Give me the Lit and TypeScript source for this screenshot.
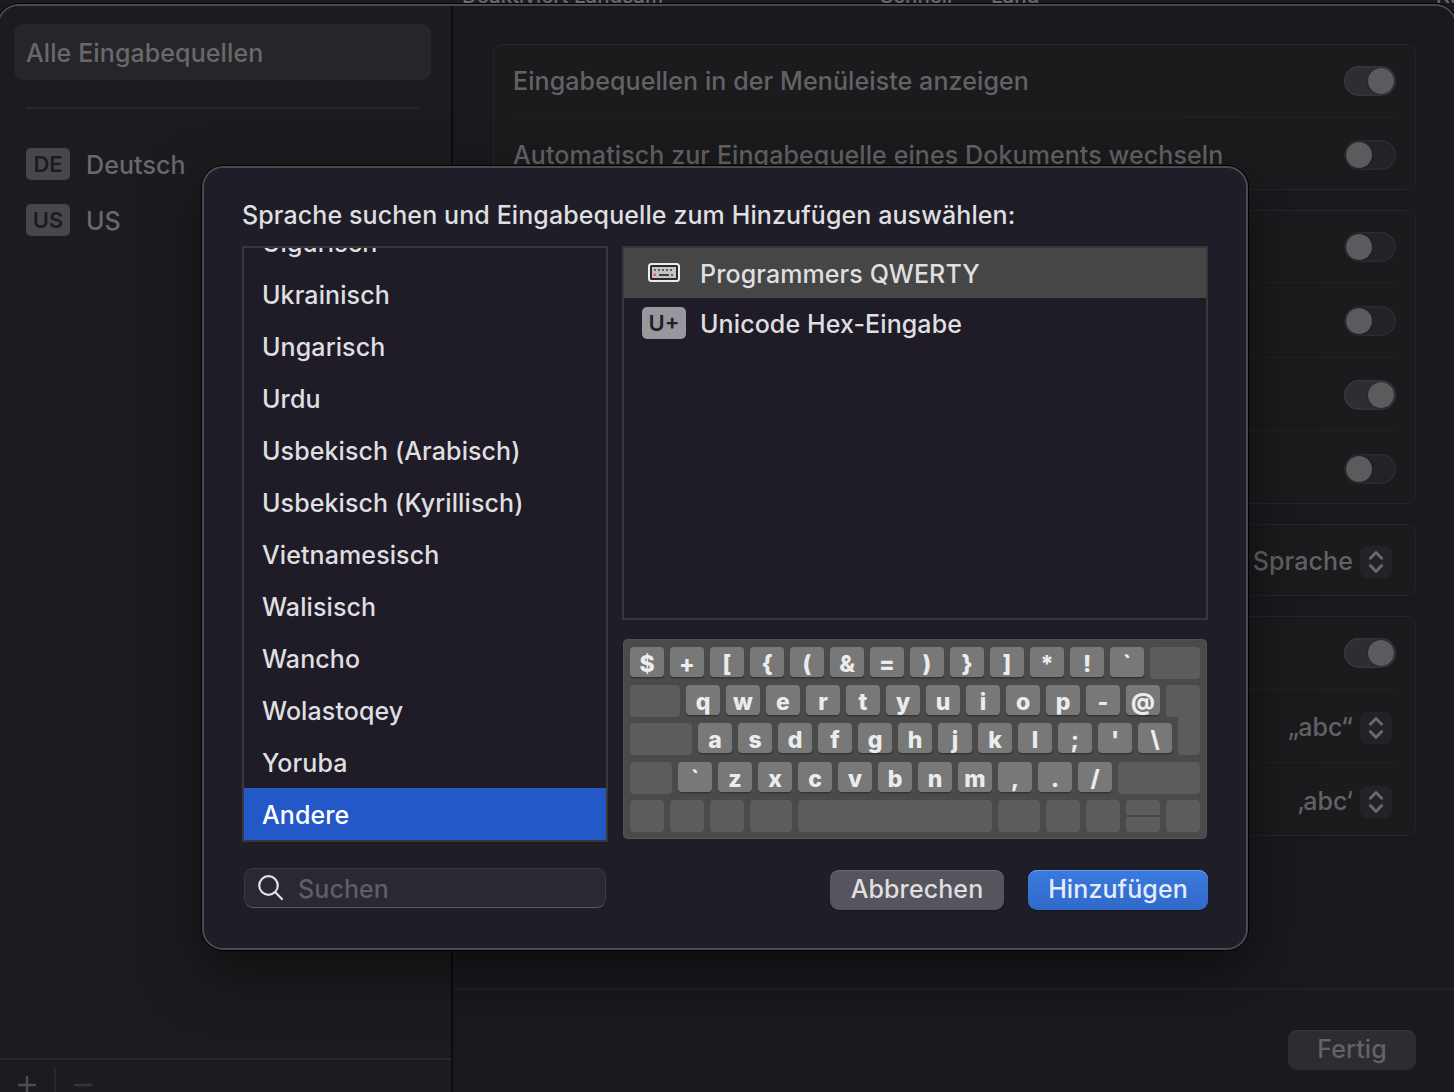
import { LitElement, html, css, svg, nothing } from "lit";
import { customElement, property } from "lit/decorators.js";
import { classMap } from "lit/directives/class-map.js";

@customElement("toggle-switch")
class ToggleSwitch extends LitElement {
  @property({ type: Boolean }) on = false;
  static styles = css`
    :host { display: block; flex: none; }
    .track {
      box-sizing: border-box; width: 52px; height: 30px; border-radius: 15px; padding: 2px;
      display: flex; background: #232227; box-shadow: inset 0 0 0 1.5px #2c2b30;
    }
    .track.on { justify-content: flex-end; background: #2e2d34; box-shadow: inset 0 0 0 1.5px #37363c; }
    .knob { width: 26px; height: 26px; border-radius: 50%; background: #5b5a5c; box-shadow: 0 0 2px #17161a; }
  `;
  render() {
    return html`<div class=${classMap({ track: true, on: this.on })}><div class="knob"></div></div>`;
  }
}

@customElement("popup-value")
class PopupValue extends LitElement {
  @property() label = "";
  static styles = css`
    :host { display: flex; align-items: center; gap: 7px; padding-right: 4px; }
    .icon { display: block; position: relative; top: 1px; }
  `;
  render() {
    return html`<span>${this.label}</span>
      <svg class="icon" width="32" height="32" viewBox="0 0 32 32">
        <rect width="32" height="32" rx="7" fill="#232227"></rect>
        <path d="M10.300 12.200 16 6.400l5.700 5.800M10.300 19.600l5.700 5.800 5.700-5.800" fill="none" stroke="#6a696c"
          stroke-width="2.800" stroke-linecap="round" stroke-linejoin="round"></path>
      </svg>`;
  }
}

type Key = { t?: string; w?: number; kind?: string };
const chars = (s: string): Key[] => s.split("").map((t) => ({ t }));
const blank = (w = 34, kind = ""): Key => ({ w, kind });
const KEY_ROWS: Key[][] = [
  [...chars("$+[{(&=)}]*!`"), blank(50)],
  [blank(50), ...chars("qwertyuiop-@"), blank(34, "enter-top")],
  [blank(62), ...chars("asdfghjkl;'\\"), blank(22, "enter-low")],
  [blank(42), ...chars("`zxcvbnm,./"), blank(82)],
  [blank(), blank(), blank(), blank(42), blank(194), blank(42), blank(), blank(), blank(34, "split"), blank()],
];

@customElement("keyboard-preview")
class KeyboardPreview extends LitElement {
  static styles = css`
    :host { display: block; }
    .board {
      box-sizing: border-box; width: 584px; height: 200px; border-radius: 5px; background: #4a4a4a;
      box-shadow: inset 0 0 0 1px #525252; padding: 8px 7px 0;
      display: grid; grid-auto-rows: 38.2px;
    }
    .row { display: flex; gap: 6px; align-items: flex-start; }
    .key {
      width: 34px; height: 30px; flex: none; border-radius: 4px; background: #787878;
      box-shadow: 0 1.500px 0.500px #353535; color: #ececec;
      font-weight: 800; font-size: 23px; line-height: 34px; text-align: center; letter-spacing: 0;
    }
    .blank { height: 32px; flex: none; border-radius: 4px; background: #5c5c5c; }
    .enter-top { border-radius: 4px 4px 0 4px; }
    .enter-low { border-radius: 0 0 4px 4px; margin-top: -7px; height: 39px; }
    .split { background: linear-gradient(#5c5c5c 15px, #484848 15px, #484848 17px, #5c5c5c 17px); }
  `;
  render() {
    return html`<div class="board">
      ${KEY_ROWS.map(
        (row) => html`<div class="row">
          ${row.map((k) =>
            k.t
              ? html`<div class="key">${k.t}</div>`
              : html`<div class="blank ${k.kind}" style="width:${k.w}px"></div>`
          )}
        </div>`
      )}
    </div>`;
  }
}

type Setting = { label?: string; on?: boolean; value?: string };
const CARDS: Setting[][] = [
  [
    { label: "Eingabequellen in der Menüleiste anzeigen", on: true },
    { label: "Automatisch zur Eingabequelle eines Dokuments wechseln", on: false },
  ],
  [{ on: false }, { on: false }, { on: true }, { on: false }],
  [{ value: "Sprache" }],
  [{ on: true }, { value: "„abc“" }, { value: "‚abc‘" }],
];
const LANGUAGES = [
  "Uigurisch", "Ukrainisch", "Ungarisch", "Urdu", "Usbekisch (Arabisch)", "Usbekisch (Kyrillisch)",
  "Vietnamesisch", "Walisisch", "Wancho", "Wolastoqey", "Yoruba", "Andere",
];

const keyboardIcon = svg`
  <rect x="1" y="1" width="30" height="17" rx="2.500" fill="#2b2b2b" stroke="#ececec" stroke-width="2"></rect>
  <rect x="4" y="4" width="24" height="11" fill="#c4c4c4"></rect>
  <g fill="#606060">
    <rect x="6" y="6" width="2" height="2"></rect><rect x="10" y="6" width="2" height="2"></rect>
    <rect x="14" y="6" width="2" height="2"></rect><rect x="18" y="6" width="2" height="2"></rect>
    <rect x="22" y="6" width="2" height="2"></rect>
    <rect x="11" y="11" width="10" height="2" fill="#404040"></rect><rect x="23" y="11" width="2" height="2"></rect>
  </g>
  <rect x="5.500" y="10.500" width="2.500" height="2.500" fill="#e8605c"></rect>`;

@customElement("app-root")
class AppRoot extends LitElement {
  static styles = css`
    :host {
      display: block; position: relative; width: 1454px; height: 1092px; overflow: hidden;
      background: #1b1a1e; color: #636265;
      font-family: Inter, "Liberation Sans", sans-serif; font-size: 25px; line-height: 30px; font-weight: 470;
      letter-spacing: 0.1px; white-space: nowrap;
    }
    .behind {
      height: 3px; overflow: hidden; display: flex; background: #1c1b21;
      font-size: 20.5px; line-height: 26px; padding-left: 462px; color: #6a696c; letter-spacing: 0;
    }
    .behind span { flex: none; margin-top: -17px; }
    .b1 { width: 418px; }
    .b2 { width: 111px; }
    .b3 { width: 445px; }
    .window {
      box-sizing: border-box; margin: 1px -3px 0 -3px; height: 1120px; border: 2px solid #4a494d;
      border-radius: 22px; box-shadow: 0 0 0 1px #000; display: flex; overflow: hidden;
    }
    .sidebar {
      box-sizing: border-box; width: 454px; height: 1086px; flex: none; border-right: 2px solid #0c0c0e;
      background: #1c1b1f; display: flex; flex-direction: column; padding: 18px 0 0 1px;
    }
    .all {
      box-sizing: border-box; height: 56px; width: 417px; margin-left: 14px; border-radius: 9px;
      background: #262529; padding: 0 12px; line-height: 58px; flex: none; color: #69686b;
    }
    .rule { height: 2px; background: #28272b; margin: 27px 32px 0 26px; flex: none; }
    .sources { display: flex; flex-direction: column; gap: 24px; padding: 39px 0 0 26px; flex: 1; color: #69686b; }
    .source { display: flex; align-items: center; gap: 16px; height: 32px; line-height: 32px; }
    .source span { padding-top: 2px; }
    .badge {
      width: 44px; height: 32px; border-radius: 5px; background: #48474d; color: #1c1b1f; flex: none;
      text-align: center; font-weight: 600; font-size: 22px; line-height: 32px; letter-spacing: 0;
    }
    .tools { height: 32px; border-top: 2px solid #28282b; display: flex; flex: none; padding-left: 18px; }
    .plus { margin-top: 16px; }
    .bar { width: 2px; margin: 8px 18px 0; background: #29292c; }
    .pane { flex: 1; height: 1086px; display: flex; flex-direction: column; background: #1a191e; }
    .cards { display: flex; flex-direction: column; gap: 20px; padding: 38px 39px 0 40px; height: 944px; }
    .card {
      border-radius: 9px; background: #1b1a1d; box-shadow: inset 0 0 0 1px #262529; padding: 0 20px;
    }
    .row {
      height: 70px; padding-top: 2px; border-bottom: 2px solid #1f1e21; display: flex;
      align-items: center; justify-content: space-between;
    }
    .row:last-child { border-bottom: 0; }
    .footer {
      border-top: 2px solid #222126; display: flex; justify-content: flex-end; padding: 40px 39px 0 0;
    }
    .button {
      height: 40px; border-radius: 9px; text-align: center; line-height: 39px; letter-spacing: 0.1px;
    }
    .done { width: 128px; background: #2d2c31; box-shadow: inset 0 1px 0 #36353a; }
    .dialog {
      box-sizing: border-box; position: absolute; left: 202px; top: 166px; width: 1046px; height: 784px;
      border: 2px solid #4b4a50; border-radius: 21px; background: #1f1d27; color: #dfdfe0;
      box-shadow: 0 0 0 1px #000, 0 22px 60px rgba(0, 0, 0, 0.5); padding: 32px 38px 0;
    }
    .title { height: 46px; }
    .columns { display: flex; gap: 14px; }
    .left { width: 366px; flex: none; }
    .list {
      box-sizing: border-box; height: 596px; border: 2px solid #383838; overflow: hidden;
      display: flex; flex-direction: column; justify-content: flex-end; background: #1f1c27;
    }
    .lang { height: 52px; flex: none; padding-left: 18px; line-height: 54px; }
    .lang.sel { background: #2458c8; color: #fff; }
    .search {
      box-sizing: border-box; height: 40px; margin: 26px 2px 0; border-radius: 9px; background: #2a2832;
      border: 1px solid #3a3842; border-bottom-color: #5a5860; display: flex; align-items: center;
      padding-left: 13px; gap: 14px; color: #5f5e65; line-height: 38px;
    }
    .search span { padding-top: 2px; }
    .right { width: 586px; flex: none; }
    .inputs { box-sizing: border-box; height: 374px; border: 2px solid #383838; background: #1f1c27; }
    .input { height: 50px; display: flex; align-items: center; padding-left: 18px; gap: 14px; }
    .input span { position: relative; top: 1px; }
    .input.sel { background: #464646; }
    .slot { width: 44px; display: flex; justify-content: center; }
    .dialog .badge { background: #98979d; color: #1f1d27; }
    .board { padding: 19px 1px 0; }
    .actions { display: flex; justify-content: flex-end; gap: 24px; padding-top: 31px; }
    .cancel { width: 174px; background: #56545d; box-shadow: inset 0 1px 0 #6b6972, 0 1px 1px #15141a; }
    .add {
      width: 180px; background: linear-gradient(#3b7ae0, #3069c8); color: #e4ecfb;
      box-shadow: inset 0 1px 0 #6a9cec, 0 1px 1px #15141a;
    }
  `;

  private setting(s: Setting) {
    return html`<div class="row">
      <span>${s.label ?? nothing}</span>
      ${s.value
        ? html`<popup-value .label=${s.value}></popup-value>`
        : html`<toggle-switch .on=${!!s.on}></toggle-switch>`}
    </div>`;
  }

  render() {
    return html`
      <div class="behind">
        <span class="b1">Deaktiviert Langsam</span><span class="b2">Schnell</span>
        <span class="b3">Lang</span><span>Kurz</span>
      </div>
      <div class="window">
        <div class="sidebar">
          <div class="all">Alle Eingabequellen</div>
          <div class="rule"></div>
          <div class="sources">
            <div class="source"><div class="badge">DE</div><span>Deutsch</span></div>
            <div class="source"><div class="badge">US</div><span>US</span></div>
          </div>
          <div class="tools">
            <svg class="plus" width="18" height="18"><path d="M1 9h16M9 1v16" stroke="#4f4e52" stroke-width="2.400" stroke-linecap="round"/></svg>
            <div class="bar"></div>
            <svg class="plus" width="18" height="18"><path d="M1 9h16" stroke="#353438" stroke-width="2.400" stroke-linecap="round"/></svg>
          </div>
        </div>
        <div class="pane">
          <div class="cards">${CARDS.map((c) => html`<div class="card">${c.map((s) => this.setting(s))}</div>`)}</div>
          <div class="footer"><div class="button done">Fertig</div></div>
        </div>
      </div>
      <div class="dialog">
        <div class="title">Sprache suchen und Eingabequelle zum Hinzufügen auswählen:</div>
        <div class="columns">
          <div class="left">
            <div class="list">
              ${LANGUAGES.map((l) => html`<div class=${classMap({ lang: true, sel: l === "Andere" })}>${l}</div>`)}
            </div>
            <div class="search">
              <svg width="26" height="26" fill="none" stroke="#e2e2e4" stroke-width="2.200" stroke-linecap="round">
                <circle cx="10.500" cy="10.500" r="9.300"></circle><path d="M17.300 17.300 24 24"></path>
              </svg>
              <span>Suchen</span>
            </div>
          </div>
          <div class="right">
            <div class="inputs">
              <div class="input sel">
                <div class="slot"><svg width="32" height="20">${keyboardIcon}</svg></div>
                <span>Programmers QWERTY</span>
              </div>
              <div class="input"><div class="badge">U+</div><span>Unicode Hex-Eingabe</span></div>
            </div>
            <div class="board"><keyboard-preview></keyboard-preview></div>
            <div class="actions">
              <div class="button cancel">Abbrechen</div>
              <div class="button add">Hinzufügen</div>
            </div>
          </div>
        </div>
      </div>
    `;
  }
}
